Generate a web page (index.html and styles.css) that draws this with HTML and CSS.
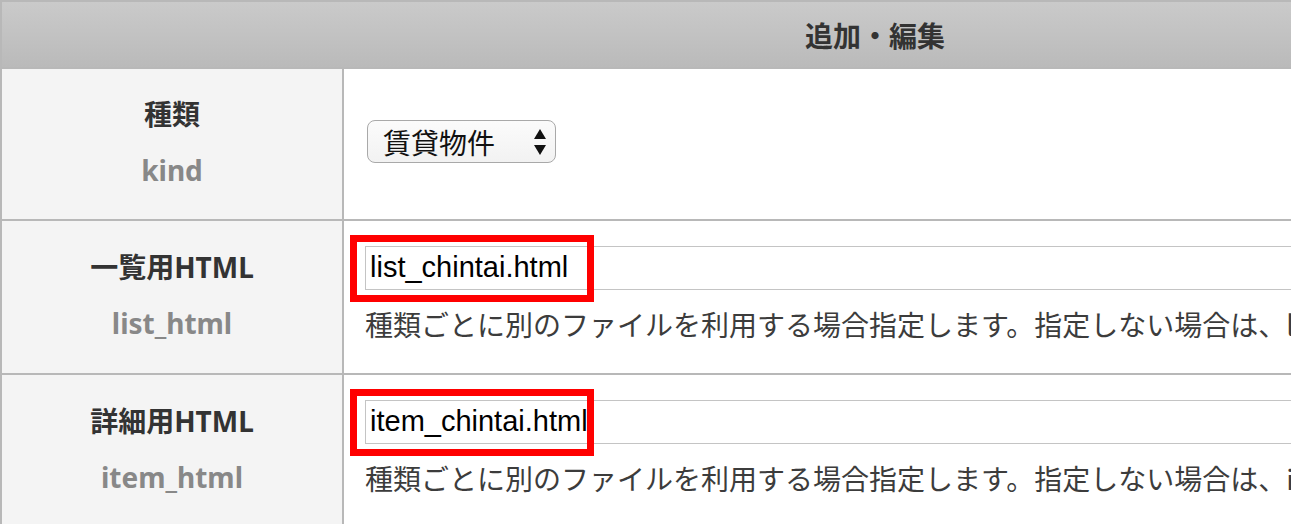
FILE: index.html
```html
<!DOCTYPE html>
<html lang="ja">

<head>
    <meta charset="UTF-8">
    <meta name="viewport" content="width=device-width, initial-scale=1.0">
    <title>追加・編集</title>
    <link rel="stylesheet" href="styles.css">
</head>

<body>

    <table class="edit-table">
        <thead>
            <tr>
                <th colspan="2" class="head-cell">追加・編集</th>
            </tr>
        </thead>
        <tbody>
            <tr class="row-kind">
                <th class="label-cell">
                    <div class="label-name">種類</div>
                    <div class="label-key">kind</div>
                </th>
                <td class="value-cell">
                    <span class="select-wrap">
                        <select class="select">
                            <option>賃貸物件</option>
                            <option>売買物件</option>
                        </select>
                        <svg class="select-arrows" width="14" height="30" viewBox="0 0 14 30">
                            <path d="M7 2 L13 12 L1 12 Z" fill="#111" />
                            <path d="M1 18 L13 18 L7 28 Z" fill="#111" />
                        </svg>
                    </span>
                </td>
            </tr>
            <tr>
                <th class="label-cell">
                    <div class="label-name">一覧用HTML</div>
                    <div class="label-key">list_html</div>
                </th>
                <td class="value-cell">
                    <div class="field">
                        <input class="text-input" type="text" value="list_chintai.html">
                        <span class="mark"></span>
                    </div>
                    <p class="note">種類ごとに別のファイルを利用する場合指定します。指定しない場合は、list.htmlを利用します。</p>
                </td>
            </tr>
            <tr>
                <th class="label-cell">
                    <div class="label-name">詳細用HTML</div>
                    <div class="label-key">item_html</div>
                </th>
                <td class="value-cell">
                    <div class="field">
                        <input class="text-input" type="text" value="item_chintai.html">
                        <span class="mark"></span>
                    </div>
                    <p class="note">種類ごとに別のファイルを利用する場合指定します。指定しない場合は、item.htmlを利用します。</p>
                </td>
            </tr>
        </tbody>
    </table>

</body>

</html>
```

FILE: styles.css
```css
/* Page */
body {
    margin: 0;
    background: #fff;
    font-family: "Noto Sans", "Noto Sans CJK JP", sans-serif;
    color: #333;
}

/* Table */
.edit-table {
    width: 1750px;
    border-collapse: collapse;
    border: 2px solid #b8b8b8;
}

.edit-table th,
.edit-table td {
    border: 2px solid #b8b8b8;
    padding: 0;
}

.head-cell {
    height: 65px;
    background: linear-gradient(#cacaca, #bababa);
    font-size: 28px;
    font-weight: bold;
    color: #333;
    text-align: center;
    vertical-align: middle;
}

/* Left labels */
.label-cell {
    width: 340px;
    height: 147px;
    padding-bottom: 5px !important;
    background: #f4f4f4;
    text-align: center;
    vertical-align: middle;
    font-weight: bold;
}

.row-kind .label-cell {
    height: 145px;
}

.label-name {
    font-size: 28px;
    line-height: 56px;
    color: #333;
}

.label-key {
    font-size: 28px;
    line-height: 56px;
    color: #888;
}

/* Right values */
.value-cell {
    padding: 0 0 5px 21px !important;
    vertical-align: middle;
    text-align: left;
}

.select-wrap {
    position: relative;
    display: inline-block;
    margin-left: 2px;
}

.select {
    -webkit-appearance: none;
    appearance: none;
    width: 189px;
    height: 43px;
    padding: 0 0 0 15px;
    border: 1px solid #a9a9a9;
    border-radius: 8px;
    background: linear-gradient(#fbfbfb, #f2f2f2);
    font-family: "Noto Sans CJK JP", sans-serif;
    font-size: 28px;
    color: #111;
}

.select-arrows {
    position: absolute;
    right: 9px;
    top: 7px;
    pointer-events: none;
}

.field {
    position: relative;
}

.text-input {
    display: block;
    width: 1100px;
    height: 44px;
    box-sizing: border-box;
    padding: 0 0 0 4px;
    border: 1px solid #c4c4c4;
    font-family: "Liberation Sans", sans-serif;
    font-size: 29px;
    color: #000;
}

/* red annotation box */
.mark {
    position: absolute;
    left: -15px;
    top: -11px;
    width: 230px;
    height: 53px;
    border: 7px solid #f00;
    pointer-events: none;
}

.note {
    margin: 14px 0 0;
    font-family: "Noto Sans CJK JP", sans-serif;
    font-size: 28px;
    line-height: 40px;
    color: #3c3c3c;
    white-space: nowrap;
}
```
